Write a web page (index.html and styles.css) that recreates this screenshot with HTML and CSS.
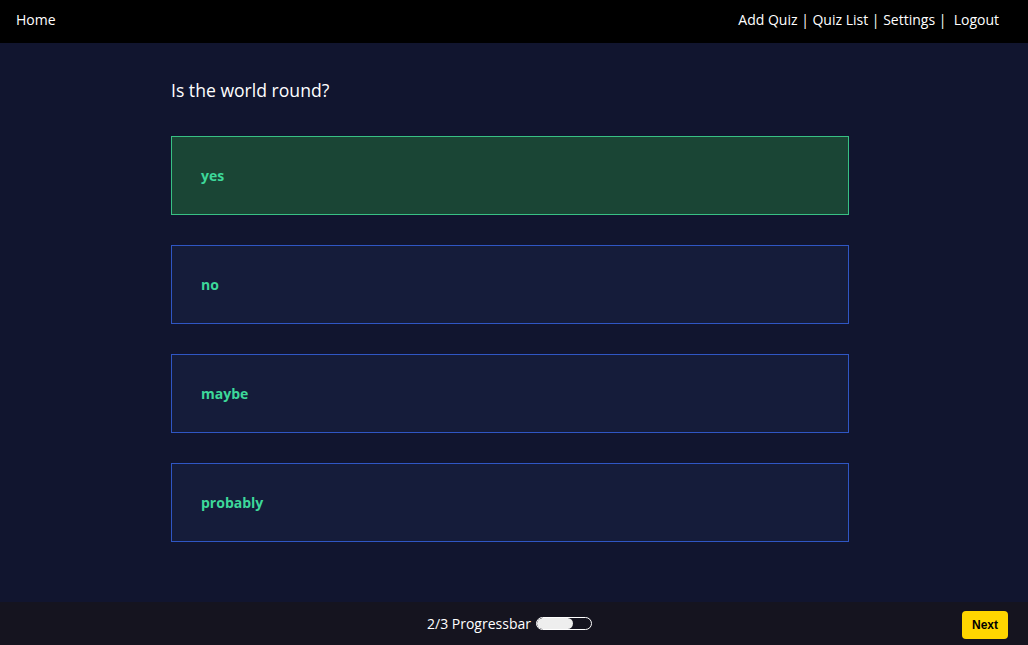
FILE: index.html
```html
<!DOCTYPE html>
<html>
<head>
<meta charset="utf-8">
<link rel="stylesheet" href="styles.css">
</head>
<body>
<header class="topbar">
  <a class="nav-home">Home</a>
  <nav class="nav-links">Add Quiz | Quiz List | Settings | &nbsp;Logout</nav>
</header>
<main class="quiz">
  <h1 class="question">Is the world round?</h1>
  <div class="answers">
    <div class="answer selected">yes</div>
    <div class="answer">no</div>
    <div class="answer">maybe</div>
    <div class="answer">probably</div>
  </div>
</main>
<footer class="bottombar">
  <div class="progress">
    <span>2/3 Progressbar</span>
    <span class="bar"><span class="fill"></span></span>
  </div>
  <button class="next">Next</button>
</footer>
</body>
</html>
```
FILE: styles.css
```css
* { box-sizing: border-box; }
html, body { margin: 0; padding: 0; }
body {
  background: #11152f;
  font-family: "Open Sans", "Noto Sans", sans-serif;
  color: #fff;
  height: 645px;
  display: flex;
  flex-direction: column;
  overflow: hidden;
}
.topbar {
  height: 43px;
  background: #000;
  display: flex;
  justify-content: space-between;
  align-items: center;
  padding: 0 29px 4px 16px;
  font-size: 14px;
  flex-shrink: 0;
}
.nav-home, .nav-links { color: #fff; }
.quiz {
  flex: 1;
  width: 678px;
  margin-left: 171px;
  padding-top: 33px;
}
.question {
  margin: 0;
  font-size: 17.6px;
  font-weight: 400;
  line-height: 28px;
}
.answers {
  margin-top: 32px;
  display: flex;
  flex-direction: column;
  gap: 30px;
}
.answer {
  height: 79px;
  border: 1px solid #2f56c4;
  background: #151c3a;
  display: flex;
  align-items: center;
  padding-left: 29px;
  color: #3dd89a;
  font-weight: 700;
  font-size: 14px;
}
.answer.selected {
  background: #1a4535;
  border-color: #38c084;
}
.bottombar {
  height: 43px;
  background: #15141f;
  flex-shrink: 0;
  display: flex;
  align-items: center;
  justify-content: center;
  position: relative;
  font-size: 14px;
}
.progress {
  display: flex;
  align-items: center;
  gap: 5px;
  margin-right: 9px;
}
.bar {
  width: 56px;
  height: 13px;
  border: 1px solid #fff;
  border-radius: 7px;
  display: flex;
  overflow: hidden;
}
.fill {
  width: 36px;
  background: #eee;
  border-radius: 7px;
}
.next {
  position: absolute;
  right: 20px;
  top: 9px;
  height: 28px;
  width: 46px;
  background: #ffd600;
  border: none;
  border-radius: 4px;
  font-family: "Liberation Sans", Arial, sans-serif;
  font-weight: 700;
  font-size: 12px;
  color: #000;
  padding: 0;
}
```
